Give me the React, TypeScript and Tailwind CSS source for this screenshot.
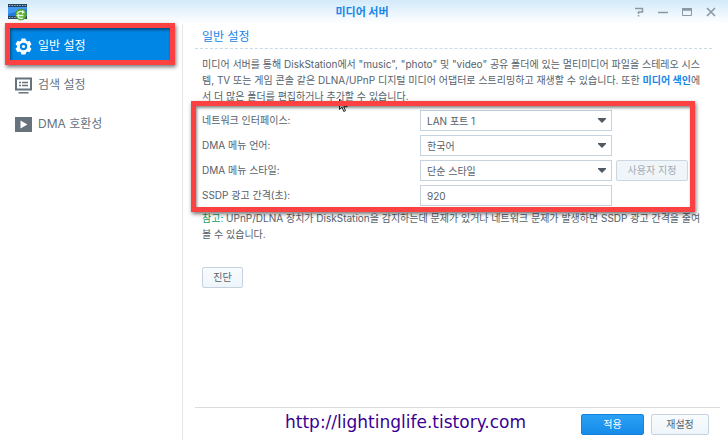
import type { ReactNode } from "react";

const sans = "font-['Inter','Noto_Sans_CJK_KR',sans-serif]";

function AppLogo() {
  return (
    <svg width="20" height="17" viewBox="0 0 20 17" aria-hidden="true">
      <rect x="0" y="0" width="19" height="15" fill="#26445f" />
      <rect x="0" y="3" width="19" height="9" fill="#2579dc" />
      <path d="M0 3h19v2L0 10z" fill="#3f98f2" />
      <path d="M1 1.500h18M1 13.500h12" stroke="#9fb6c8" strokeWidth="1.200" strokeDasharray="1.400 1.200" />
      <circle cx="13" cy="10.500" r="5.500" fill="#5cae2c" stroke="#3f8d2a" strokeWidth=".6" />
      <path d="M9 9.500c2-2 4-2.500 5.500-1.500M9.500 11.500h6M15 14c-2 1-3.500.5-5-.8" fill="none" stroke="#e9f6df" strokeWidth="1.300" />
      <path d="M14 6l3 2-3 2zM11 9.800v3.400l-3-1.700z" fill="#e9f6df" />
    </svg>
  );
}

function GearIcon() {
  return (
    <svg width="17" height="17" viewBox="0 0 17 17" aria-hidden="true">
      <path
        fill="#fff"
        fillRule="evenodd"
        d="M6.500.5h4l.5 2 1.500.9 2-.6 2 3.500-1.500 1.400v1.600l1.500 1.400-2 3.500-2-.6-1.500.9-.5 2h-4l-.5-2-1.500-.9-2 .6-2-3.500L2 9.300V7.700L.5 6.300l2-3.500 2 .6L6 2.500zM8.500 4.800a3.700 3.700 0 1 0 0 7.400 3.700 3.700 0 0 0 0-7.400z"
      />
      <circle cx="8.500" cy="8.500" r="1.600" fill="#fff" />
    </svg>
  );
}

function IndexIcon() {
  return (
    <svg width="17" height="17" viewBox="0 0 17 17" aria-hidden="true">
      <rect x="1" y="1.500" width="15" height="11" fill="#fff" stroke="#66727c" strokeWidth="2" />
      <path d="M4 5.500h2M7 5.500h6M4 8.500h2M7 8.500h6" stroke="#66727c" strokeWidth="1.500" />
      <path d="M3.500 15.800h10" stroke="#66727c" strokeWidth="1.500" />
    </svg>
  );
}

function PlayIcon() {
  return (
    <svg width="17" height="17" viewBox="0 0 17 17" aria-hidden="true">
      <rect y="1" width="17" height="15" fill="#66727c" />
      <path d="M5.500 4.500v8l7-4z" fill="#fff" />
    </svg>
  );
}

function NavItem({ icon, label, active }: { icon: ReactNode; label: string; active?: boolean }) {
  return (
    <button
      type="button"
      className={
        active
          ? "relative flex h-[38px] items-center gap-1.5 bg-[#0086e5] px-1.5 text-[12px] text-white"
          : "flex h-[38px] items-center gap-1.5 px-1.5 text-[12px] text-[#66727c]"
      }
    >
      {icon}
      <span>{label}</span>
      {active && (
        <span className="pointer-events-none absolute -top-1 -right-[3px] bottom-0 -left-1 border-[5px] border-[#fb4141] shadow-[1px_2px_4px_rgba(0,0,0,0.55),inset_1px_2px_3px_rgba(0,0,0,0.45)]" />
      )}
    </button>
  );
}

function SelectField({ id, label, value, children }: { id: string; label: string; value: string; children?: ReactNode }) {
  return (
    <div className="flex h-[21px] items-center">
      <label htmlFor={id} className="w-[218px] shrink-0">{label}</label>
      <div className="relative w-[192px] shrink-0">
        <select id={id} className="block h-[21px] w-full appearance-none border border-[#c6d3df] bg-white px-1.5 text-[10px] leading-[18px]">
          <option>{value}</option>
        </select>
        <svg className="pointer-events-none absolute top-2 right-1.5" width="8" height="5" viewBox="0 0 8 5" aria-hidden="true">
          <path d="M0 0h8v1L4 5 0 1z" fill="#505a64" />
        </svg>
      </div>
      {children}
    </div>
  );
}

export default function App() {
  return (
    <div className={`flex min-h-screen flex-col bg-white text-[10px] text-[#56616b] ${sans}`}>
      <header className="flex h-6 items-center justify-between bg-linear-to-b from-[#d3eafa] to-white pr-3 pl-2">
        <div className="flex flex-1 items-center"><AppLogo /></div>
        <h1 className="text-[11px] font-bold text-[#1686e8]">미디어 서버</h1>
        <div className="flex flex-1 items-center justify-end gap-3.5 text-[#8b99a4]">
          <button type="button" aria-label="도움말">
            <svg width="10" height="10" viewBox="0 0 10 10" fill="none" stroke="currentColor" strokeWidth="1.500"><path d="M1 1.500h7.500V5H4.500v2M4.500 8v1.500" /></svg>
          </button>
          <button type="button" aria-label="최소화">
            <svg width="10" height="10" viewBox="0 0 10 10" stroke="currentColor" strokeWidth="1.500"><path d="M0 5.500h10" /></svg>
          </button>
          <button type="button" aria-label="최대화">
            <svg width="10" height="10" viewBox="0 0 10 10" fill="none" stroke="currentColor"><path d="M.5 1.500h9v7h-9z" /><path d="M0 2.500h10" strokeWidth="2.500" /></svg>
          </button>
          <button type="button" aria-label="닫기">
            <svg width="10" height="10" viewBox="0 0 10 10" stroke="currentColor" strokeWidth="1.700"><path d="M1 1l8 8M9 1l-8 8" /></svg>
          </button>
        </div>
      </header>

      <div className="flex flex-1">
        <nav className="flex w-[183px] shrink-0 flex-col gap-px border-r border-[#e3e6e9] pt-[3px] pr-2.5 pl-[9px]">
          <NavItem icon={<GearIcon />} label="일반 설정" active />
          <NavItem icon={<IndexIcon />} label="검색 설정" />
          <NavItem icon={<PlayIcon />} label="DMA 호환성" />
        </nav>

        <main className="flex min-w-0 flex-1 flex-col pr-2 pl-3">
          <h2 className="mr-2 h-[25px] border-b border-dashed border-[#c9dce6] pl-[7px] text-[12px] leading-[26px] text-[#1686e8]">일반 설정</h2>

          <p className="mt-[7px] pl-[7px] leading-4 whitespace-nowrap">
            미디어 서버를 통해 DiskStation에서 "music", "photo" 및 "video" 공유 폴더에 있는 멀티미디어 파일을 스테레오 시스
            <br />
            템, TV 또는 게임 콘솔 같은 DLNA/UPnP 디지털 미디어 어댑터로 스트리밍하고 재생할 수 있습니다. 또한{" "}
            <a href="#index" className="font-bold text-[#1686e8]">미디어 색인</a>에
            <br />
            서 더 많은 폴더를 편집하거나 추가할 수 있습니다.
          </p>

          <form className="relative mt-1.5 ml-[7px] flex w-[487px] flex-col gap-1">
            <SelectField id="network" label="네트워크 인터페이스:" value="LAN 포트 1" />
            <SelectField id="language" label="DMA 메뉴 언어:" value="한국어" />
            <SelectField id="style" label="DMA 메뉴 스타일:" value="단순 스타일">
              <button type="button" disabled className="ml-1 h-[21px] w-[72px] rounded-xs border border-[#cbd8e2] bg-[#f0f5f9] text-[#a0abb5]">
                사용자 지정
              </button>
            </SelectField>
            <div className="flex h-[21px] items-center">
              <label htmlFor="interval" className="w-[218px] shrink-0">SSDP 광고 간격(초):</label>
              <input id="interval" defaultValue="920" className="h-[21px] w-[192px] border border-[#c6d3df] bg-white px-1.5" />
            </div>
            <svg className="pointer-events-none absolute -top-3 left-[136px]" width="11" height="15" viewBox="0 0 11 15" aria-hidden="true">
              <path d="M1.500 1v10.500l2.500-2.300 1.800 4.300 1.700-.8-1.800-4h3.500z" fill="#fff" stroke="#222" />
            </svg>
            <span className="pointer-events-none absolute -top-[9px] -right-1.5 -bottom-1.5 -left-[11px] border-[5px] border-[#fb4141] shadow-[1px_2px_4px_rgba(0,0,0,0.55),inset_1px_2px_3px_rgba(0,0,0,0.45)]" />
          </form>

          <p className="mt-1 pl-[7px] leading-4 whitespace-nowrap">
            <span className="text-[#16a06c]">참고:</span> UPnP/DLNA 장치가 DiskStation을 감지하는데 문제가 있거나 네트워크 문제가 발생하면 SSDP 광고 간격을 줄여
            <br />볼 수 있습니다.
          </p>

          <button type="button" className="mt-[25px] ml-[7px] h-[21px] w-[41px] rounded-xs border border-[#c6d3df] bg-linear-to-b from-[#f9fcfe] to-[#eef5fa]">
            진단
          </button>

          <footer className="mt-auto flex h-[33px] items-center gap-[7px] border-t border-[#dadddf] pr-[11px]">
            <a href="http://lightinglife.tistory.com" className="-mt-1 mr-auto ml-[90px] font-['DejaVu_Sans',sans-serif] text-[17px] leading-5 text-[#390094]">
              http://lightinglife.tistory.com
            </a>
            <button type="submit" className="h-[21px] w-[63px] rounded-xs border border-[#1583dd] bg-linear-to-b from-[#2ba1f5] to-[#168be9] text-white">적용</button>
            <button type="reset" className="h-[21px] w-[58px] rounded-xs border border-[#c6d3df] bg-linear-to-b from-[#f9fcfe] to-[#eef5fa]">재설정</button>
          </footer>
        </main>
      </div>
    </div>
  );
}
